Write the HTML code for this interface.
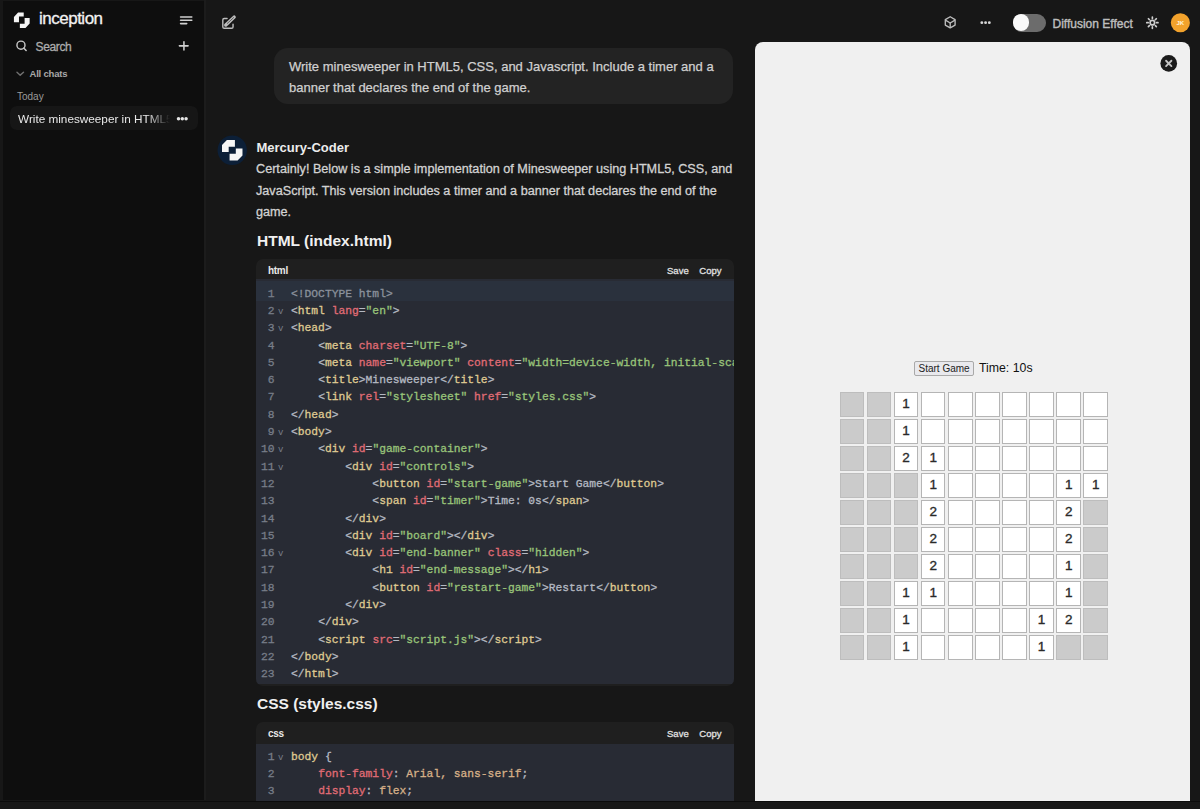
<!DOCTYPE html>
<html><head><meta charset="utf-8">
<style>
*{margin:0;padding:0;box-sizing:border-box}
html,body{width:1200px;height:809px;overflow:hidden;background:#171717;font-family:"Liberation Sans",sans-serif;color:#e0e0e0;position:relative}
.abs{position:absolute}
#side{position:absolute;left:3px;top:1px;width:201px;height:799px;background:#0e0e0e}
#sideb{position:absolute;left:204px;top:0;width:2px;height:800px;background:#1c1c1c}
#side .brand{position:absolute;left:36px;top:8px;font-size:17px;color:#f2f2f2;letter-spacing:-0.5px;-webkit-text-stroke:0.3px #f2f2f2}
#side .search{position:absolute;left:32.5px;top:39px;font-size:12px;color:#acacac;letter-spacing:-0.35px;-webkit-text-stroke:0.3px #acacac}
#side .allchats{position:absolute;left:26.5px;top:67.3px;font-size:9.5px;color:#a8a8a8;font-weight:bold;letter-spacing:-0.2px}
#side .today{position:absolute;left:14px;top:89.8px;font-size:10px;color:#9a9a9a}
#side .item{position:absolute;left:7px;top:105px;width:188px;height:24px;background:#161616;border-radius:7px}
#side .item span{position:absolute;left:8px;top:5.6px;font-size:11.75px;color:#e8e8e8;width:152px;white-space:nowrap;overflow:hidden;-webkit-mask-image:linear-gradient(90deg,#000 85%,transparent 100%)}
.bubble{position:absolute;left:274px;top:48px;width:459px;height:56px;background:#232323;border-radius:14px}
.bubble p{position:absolute;left:15px;top:8.2px;width:440px;font-size:13px;line-height:21px;color:#d0d0d0;-webkit-text-stroke:0.25px #d0d0d0}
.avatar{position:absolute;left:218px;top:136px;width:28px;height:28px;border-radius:50%;background:#0f2542}
.name{position:absolute;left:256.5px;top:140px;font-size:13px;font-weight:bold;color:#ececec}
.msg{position:absolute;left:256px;top:159px;width:485px;font-size:12.65px;line-height:21.6px;color:#d2d2d2;-webkit-text-stroke:0.3px #d2d2d2}
.h3{position:absolute;left:257px;margin-top:1.2px;font-size:15.5px;font-weight:bold;color:#f0f0f0}
.code{position:absolute;left:256px;width:478px;border-radius:7px;overflow:hidden;background:#1f1f1f}
.code .hd{height:20px;position:relative}
.code .hd .lang{position:absolute;left:12px;top:5.8px;font-size:10px;font-weight:bold;letter-spacing:-0.3px;color:#e8e8e8}
.code .hd .btns{position:absolute;right:12.5px;top:6.3px;font-size:9.5px;color:#e0e0e0;word-spacing:8px;-webkit-text-stroke:0.3px #e0e0e0}
.code .bd{background:#282b34;padding-top:6.7px}
.ln{height:17.3px;font-family:"Liberation Mono",monospace;font-size:11.3px;line-height:17.3px;white-space:pre;color:#abb2bf;position:relative;-webkit-text-stroke-width:0.3px}
.ln .n{position:absolute;left:0;width:18.6px;text-align:right;color:#777d88}
.ln .f{position:absolute;left:22px;top:1px;color:#777d88;font-size:9px;-webkit-text-stroke-width:0}
.ln .c{position:absolute;left:35px}
.t{color:#dfc991}.a{color:#e06c75}.s{color:#98c379}.g{color:#b4b9c2}.d{color:#8a919c}.v{color:#d6b088}
#panel{position:absolute;left:755px;top:42px;width:435px;height:758.6px;background:#f0f0f0;border-radius:8px 8px 0 0}
.close{position:absolute;left:1160px;top:55px;width:17px;height:17px;border-radius:50%;background:#1b1b1b}
.btn{position:absolute;left:914.4px;top:360.6px;width:59.4px;height:15px;border:1px solid #a9a9a9;border-radius:2px;background:#e9e9ed;font-size:10px;color:#222;text-align:center;line-height:13.5px}
.time{position:absolute;left:979px;top:361px;font-size:12.3px;color:#111}
#board{position:absolute;left:839.6px;top:392.1px;width:272px}
.cell{position:absolute;width:24.6px;height:24.6px;border:1px solid #b5b5b5;background:#fff;font-size:13.5px;color:#2a2a2a;-webkit-text-stroke:0.35px #2a2a2a;text-align:center;line-height:22.6px}
.cell.h{background:#cbcbcb;border-color:#bdbdbd}
</style></head><body>
<div id="sideb"></div><div id="side">
  <div class="brand">inception</div>
  <div class="search">Search</div>
  <div class="allchats">All chats</div>
  <div class="today">Today</div>
  <div class="item"><span>Write minesweeper in HTML5, CSS, and Javascript</span></div>
</div>

<div class="bubble"><p>Write minesweeper in HTML5, CSS, and Javascript. Include a timer and a banner that declares the end of the game.</p></div>

<div class="name">Mercury-Coder</div>
<div class="msg">Certainly! Below is a simple implementation of Minesweeper using HTML5, CSS, and JavaScript. This version includes a timer and a banner that declares the end of the game.</div>

<div class="h3" style="top:231px">HTML (index.html)</div>
<div class="code" style="top:259px;height:426.5px">
 <div class="hd"><span class="lang">html</span><span class="btns">Save Copy</span></div>
 <div class="bd" id="htmlcode" style="position:relative"><div style="position:absolute;left:0;top:2px;width:100%;height:20px;background:#2a313d"></div>
<div class="ln"><span class="n">1</span><span class="c"><span class="d">&lt;!DOCTYPE html&gt;</span></span></div>
<div class="ln"><span class="n">2</span><span class="f">v</span><span class="c"><span class="g">&lt;</span><span class="t">html</span> <span class="a">lang</span><span class="g">=</span><span class="s">"en"</span><span class="g">&gt;</span></span></div>
<div class="ln"><span class="n">3</span><span class="f">v</span><span class="c"><span class="g">&lt;</span><span class="t">head</span><span class="g">&gt;</span></span></div>
<div class="ln"><span class="n">4</span><span class="c">    <span class="g">&lt;</span><span class="t">meta</span> <span class="a">charset</span><span class="g">=</span><span class="s">"UTF-8"</span><span class="g">&gt;</span></span></div>
<div class="ln"><span class="n">5</span><span class="c">    <span class="g">&lt;</span><span class="t">meta</span> <span class="a">name</span><span class="g">=</span><span class="s">"viewport"</span> <span class="a">content</span><span class="g">=</span><span class="s">"width=device-width, initial-scale=1.0"</span><span class="g">&gt;</span></span></div>
<div class="ln"><span class="n">6</span><span class="c">    <span class="g">&lt;</span><span class="t">title</span><span class="g">&gt;</span><span class="g">Minesweeper</span><span class="g">&lt;/</span><span class="t">title</span><span class="g">&gt;</span></span></div>
<div class="ln"><span class="n">7</span><span class="c">    <span class="g">&lt;</span><span class="t">link</span> <span class="a">rel</span><span class="g">=</span><span class="s">"stylesheet"</span> <span class="a">href</span><span class="g">=</span><span class="s">"styles.css"</span><span class="g">&gt;</span></span></div>
<div class="ln"><span class="n">8</span><span class="c"><span class="g">&lt;/</span><span class="t">head</span><span class="g">&gt;</span></span></div>
<div class="ln"><span class="n">9</span><span class="f">v</span><span class="c"><span class="g">&lt;</span><span class="t">body</span><span class="g">&gt;</span></span></div>
<div class="ln"><span class="n">10</span><span class="f">v</span><span class="c">    <span class="g">&lt;</span><span class="t">div</span> <span class="a">id</span><span class="g">=</span><span class="s">"game-container"</span><span class="g">&gt;</span></span></div>
<div class="ln"><span class="n">11</span><span class="f">v</span><span class="c">        <span class="g">&lt;</span><span class="t">div</span> <span class="a">id</span><span class="g">=</span><span class="s">"controls"</span><span class="g">&gt;</span></span></div>
<div class="ln"><span class="n">12</span><span class="c">            <span class="g">&lt;</span><span class="t">button</span> <span class="a">id</span><span class="g">=</span><span class="s">"start-game"</span><span class="g">&gt;</span><span class="g">Start Game</span><span class="g">&lt;/</span><span class="t">button</span><span class="g">&gt;</span></span></div>
<div class="ln"><span class="n">13</span><span class="c">            <span class="g">&lt;</span><span class="t">span</span> <span class="a">id</span><span class="g">=</span><span class="s">"timer"</span><span class="g">&gt;</span><span class="g">Time: 0s</span><span class="g">&lt;/</span><span class="t">span</span><span class="g">&gt;</span></span></div>
<div class="ln"><span class="n">14</span><span class="c">        <span class="g">&lt;/</span><span class="t">div</span><span class="g">&gt;</span></span></div>
<div class="ln"><span class="n">15</span><span class="c">        <span class="g">&lt;</span><span class="t">div</span> <span class="a">id</span><span class="g">=</span><span class="s">"board"</span><span class="g">&gt;</span><span class="g">&lt;/</span><span class="t">div</span><span class="g">&gt;</span></span></div>
<div class="ln"><span class="n">16</span><span class="f">v</span><span class="c">        <span class="g">&lt;</span><span class="t">div</span> <span class="a">id</span><span class="g">=</span><span class="s">"end-banner"</span> <span class="a">class</span><span class="g">=</span><span class="s">"hidden"</span><span class="g">&gt;</span></span></div>
<div class="ln"><span class="n">17</span><span class="c">            <span class="g">&lt;</span><span class="t">h1</span> <span class="a">id</span><span class="g">=</span><span class="s">"end-message"</span><span class="g">&gt;</span><span class="g">&lt;/</span><span class="t">h1</span><span class="g">&gt;</span></span></div>
<div class="ln"><span class="n">18</span><span class="c">            <span class="g">&lt;</span><span class="t">button</span> <span class="a">id</span><span class="g">=</span><span class="s">"restart-game"</span><span class="g">&gt;</span><span class="g">Restart</span><span class="g">&lt;/</span><span class="t">button</span><span class="g">&gt;</span></span></div>
<div class="ln"><span class="n">19</span><span class="c">        <span class="g">&lt;/</span><span class="t">div</span><span class="g">&gt;</span></span></div>
<div class="ln"><span class="n">20</span><span class="c">    <span class="g">&lt;/</span><span class="t">div</span><span class="g">&gt;</span></span></div>
<div class="ln"><span class="n">21</span><span class="c">    <span class="g">&lt;</span><span class="t">script</span> <span class="a">src</span><span class="g">=</span><span class="s">"script.js"</span><span class="g">&gt;</span><span class="g">&lt;/</span><span class="t">script</span><span class="g">&gt;</span></span></div>
<div class="ln"><span class="n">22</span><span class="c"><span class="g">&lt;/</span><span class="t">body</span><span class="g">&gt;</span></span></div>
<div class="ln"><span class="n">23</span><span class="c"><span class="g">&lt;/</span><span class="t">html</span><span class="g">&gt;</span></span></div>
</div>
</div>
</div>
</div>
</div>
</div>

<div class="h3" style="top:694px">CSS (styles.css)</div>
<div class="code" style="top:722px;height:90px">
 <div class="hd" style="height:21.8px"><span class="lang">css</span><span class="btns">Save Copy</span></div>
 <div class="bd" id="csscode" style="padding-top:4.9px">
<div class="ln"><span class="n">1</span><span class="f">v</span><span class="c"><span class="t">body</span> <span class="g">{</span></span></div>
<div class="ln"><span class="n">2</span><span class="c">    <span class="a">font-family</span><span class="g">:</span> <span class="v">Arial, sans-serif</span><span class="g">;</span></span></div>
<div class="ln"><span class="n">3</span><span class="c">    <span class="a">display</span><span class="g">:</span> <span class="v">flex</span><span class="g">;</span></span></div>
<div class="ln"><span class="n">4</span><span class="c">    <span class="a">flex-direction</span><span class="g">:</span> <span class="v">column</span><span class="g">;</span></span></div>
</div>
</div>
</div>
</div>
</div>
</div>

<div id="panel"></div>
<div class="btn">Start Game</div>
<div class="time">Time: 10s</div>
<div id="board"><!--B-->
<div class="cell h" style="left:0.0px;top:0.0px"></div><div class="cell h" style="left:27.1px;top:0.0px"></div><div class="cell" style="left:54.2px;top:0.0px">1</div><div class="cell" style="left:81.3px;top:0.0px"></div><div class="cell" style="left:108.4px;top:0.0px"></div><div class="cell" style="left:135.5px;top:0.0px"></div><div class="cell" style="left:162.6px;top:0.0px"></div><div class="cell" style="left:189.7px;top:0.0px"></div><div class="cell" style="left:216.8px;top:0.0px"></div><div class="cell" style="left:243.9px;top:0.0px"></div>
<div class="cell h" style="left:0.0px;top:27.0px"></div><div class="cell h" style="left:27.1px;top:27.0px"></div><div class="cell" style="left:54.2px;top:27.0px">1</div><div class="cell" style="left:81.3px;top:27.0px"></div><div class="cell" style="left:108.4px;top:27.0px"></div><div class="cell" style="left:135.5px;top:27.0px"></div><div class="cell" style="left:162.6px;top:27.0px"></div><div class="cell" style="left:189.7px;top:27.0px"></div><div class="cell" style="left:216.8px;top:27.0px"></div><div class="cell" style="left:243.9px;top:27.0px"></div>
<div class="cell h" style="left:0.0px;top:54.1px"></div><div class="cell h" style="left:27.1px;top:54.1px"></div><div class="cell" style="left:54.2px;top:54.1px">2</div><div class="cell" style="left:81.3px;top:54.1px">1</div><div class="cell" style="left:108.4px;top:54.1px"></div><div class="cell" style="left:135.5px;top:54.1px"></div><div class="cell" style="left:162.6px;top:54.1px"></div><div class="cell" style="left:189.7px;top:54.1px"></div><div class="cell" style="left:216.8px;top:54.1px"></div><div class="cell" style="left:243.9px;top:54.1px"></div>
<div class="cell h" style="left:0.0px;top:81.1px"></div><div class="cell h" style="left:27.1px;top:81.1px"></div><div class="cell h" style="left:54.2px;top:81.1px"></div><div class="cell" style="left:81.3px;top:81.1px">1</div><div class="cell" style="left:108.4px;top:81.1px"></div><div class="cell" style="left:135.5px;top:81.1px"></div><div class="cell" style="left:162.6px;top:81.1px"></div><div class="cell" style="left:189.7px;top:81.1px"></div><div class="cell" style="left:216.8px;top:81.1px">1</div><div class="cell" style="left:243.9px;top:81.1px">1</div>
<div class="cell h" style="left:0.0px;top:108.1px"></div><div class="cell h" style="left:27.1px;top:108.1px"></div><div class="cell h" style="left:54.2px;top:108.1px"></div><div class="cell" style="left:81.3px;top:108.1px">2</div><div class="cell" style="left:108.4px;top:108.1px"></div><div class="cell" style="left:135.5px;top:108.1px"></div><div class="cell" style="left:162.6px;top:108.1px"></div><div class="cell" style="left:189.7px;top:108.1px"></div><div class="cell" style="left:216.8px;top:108.1px">2</div><div class="cell h" style="left:243.9px;top:108.1px"></div>
<div class="cell h" style="left:0.0px;top:135.2px"></div><div class="cell h" style="left:27.1px;top:135.2px"></div><div class="cell h" style="left:54.2px;top:135.2px"></div><div class="cell" style="left:81.3px;top:135.2px">2</div><div class="cell" style="left:108.4px;top:135.2px"></div><div class="cell" style="left:135.5px;top:135.2px"></div><div class="cell" style="left:162.6px;top:135.2px"></div><div class="cell" style="left:189.7px;top:135.2px"></div><div class="cell" style="left:216.8px;top:135.2px">2</div><div class="cell h" style="left:243.9px;top:135.2px"></div>
<div class="cell h" style="left:0.0px;top:162.2px"></div><div class="cell h" style="left:27.1px;top:162.2px"></div><div class="cell h" style="left:54.2px;top:162.2px"></div><div class="cell" style="left:81.3px;top:162.2px">2</div><div class="cell" style="left:108.4px;top:162.2px"></div><div class="cell" style="left:135.5px;top:162.2px"></div><div class="cell" style="left:162.6px;top:162.2px"></div><div class="cell" style="left:189.7px;top:162.2px"></div><div class="cell" style="left:216.8px;top:162.2px">1</div><div class="cell h" style="left:243.9px;top:162.2px"></div>
<div class="cell h" style="left:0.0px;top:189.2px"></div><div class="cell h" style="left:27.1px;top:189.2px"></div><div class="cell" style="left:54.2px;top:189.2px">1</div><div class="cell" style="left:81.3px;top:189.2px">1</div><div class="cell" style="left:108.4px;top:189.2px"></div><div class="cell" style="left:135.5px;top:189.2px"></div><div class="cell" style="left:162.6px;top:189.2px"></div><div class="cell" style="left:189.7px;top:189.2px"></div><div class="cell" style="left:216.8px;top:189.2px">1</div><div class="cell h" style="left:243.9px;top:189.2px"></div>
<div class="cell h" style="left:0.0px;top:216.2px"></div><div class="cell h" style="left:27.1px;top:216.2px"></div><div class="cell" style="left:54.2px;top:216.2px">1</div><div class="cell" style="left:81.3px;top:216.2px"></div><div class="cell" style="left:108.4px;top:216.2px"></div><div class="cell" style="left:135.5px;top:216.2px"></div><div class="cell" style="left:162.6px;top:216.2px"></div><div class="cell" style="left:189.7px;top:216.2px">1</div><div class="cell" style="left:216.8px;top:216.2px">2</div><div class="cell h" style="left:243.9px;top:216.2px"></div>
<div class="cell h" style="left:0.0px;top:243.3px"></div><div class="cell h" style="left:27.1px;top:243.3px"></div><div class="cell" style="left:54.2px;top:243.3px">1</div><div class="cell" style="left:81.3px;top:243.3px"></div><div class="cell" style="left:108.4px;top:243.3px"></div><div class="cell" style="left:135.5px;top:243.3px"></div><div class="cell" style="left:162.6px;top:243.3px"></div><div class="cell" style="left:189.7px;top:243.3px">1</div><div class="cell h" style="left:216.8px;top:243.3px"></div><div class="cell h" style="left:243.9px;top:243.3px"></div>
</div><!--E-->

<!-- sidebar icons -->
<svg class="abs" style="left:8px;top:8px" width="28" height="24" viewBox="0 0 944 809" preserveAspectRatio="none"><g fill="#f4f4f4"><polygon points="340,150 530,150 530,290 370,290 370,480 200,480 200,300"/><polygon points="590,670 400,670 400,530 560,530 560,340 730,340 730,520"/></g></svg>
<svg class="abs" style="left:10px;top:36px" width="30" height="48" viewBox="0 0 506 809" preserveAspectRatio="none"><circle cx="185" cy="155" r="68" fill="none" stroke="#c8c8c8" stroke-width="24"/><line x1="235" y1="205" x2="272" y2="243" stroke="#c8c8c8" stroke-width="26" stroke-linecap="round"/><polyline points="118,612 172,660 228,612" fill="none" stroke="#707070" stroke-width="24" stroke-linecap="round" stroke-linejoin="round"/></svg>
<svg class="abs" style="left:170px;top:8px" width="30" height="48" viewBox="0 0 506 809" preserveAspectRatio="none"><g stroke="#d0d0d0" stroke-width="26" stroke-linecap="round"><line x1="178" y1="150" x2="368" y2="150"/><line x1="178" y1="208" x2="368" y2="208"/><line x1="178" y1="263" x2="282" y2="263"/><line x1="235" y1="568" x2="235" y2="708"/><line x1="158" y1="638" x2="305" y2="638"/></g></svg>
<svg class="abs" style="left:140px;top:100px" width="70" height="36" viewBox="0 0 1200 617" preserveAspectRatio="none"><g fill="#e6e6e6"><circle cx="660" cy="320" r="30"/><circle cx="725" cy="320" r="30"/><circle cx="790" cy="320" r="30"/></g></svg>
<!-- edit icon -->
<svg class="abs" style="left:216px;top:10px" width="26" height="26" viewBox="0 0 809 809"><g fill="none" stroke="#bdbdbd" stroke-width="44" stroke-linejoin="round" stroke-linecap="round"><path d="M345 265 L255 265 Q212 265 212 308 L212 528 Q212 570 255 570 L488 570 Q530 570 530 528 L530 440"/></g><line x1="305" y1="465" x2="565" y2="222" stroke="#bdbdbd" stroke-width="105" stroke-linecap="round"/><line x1="350" y1="420" x2="548" y2="236" stroke="#5a5a5a" stroke-width="30" stroke-linecap="round"/><polygon points="262,512 275,440 335,500" fill="#bdbdbd"/></svg>
<!-- top right -->
<svg class="abs" style="left:940px;top:12px" width="22" height="22" viewBox="0 0 809 809"><g fill="none" stroke="#bcbcbc" stroke-width="50" stroke-linejoin="round"><polygon points="375,175 555,280 555,480 375,585 195,480 195,280"/><polyline points="200,300 375,405 550,300"/><line x1="375" y1="405" x2="375" y2="585"/></g></svg>
<svg class="abs" style="left:930px;top:5px" width="100" height="40" viewBox="0 0 1200 480"><g fill="#d8d8d8"><circle cx="622" cy="212" r="17"/><circle cx="667" cy="212" r="17"/><circle cx="712" cy="212" r="17"/></g></svg>
<div class="abs" style="left:1013px;top:13.6px;width:32.6px;height:18.2px;border-radius:9.1px;background:#6c6c6c"></div>
<div class="abs" style="left:1012.9px;top:14.3px;width:16.4px;height:16.4px;border-radius:50%;background:#fafafa"></div>
<div class="abs" style="left:1052.5px;top:16.7px;font-size:12px;-webkit-text-stroke:0.4px #bdbdbd;color:#bdbdbd">Diffusion Effect</div>
<svg class="abs" style="left:1140px;top:8px" width="56" height="30" viewBox="0 0 1200 643"><g stroke="#cfcfcf" stroke-width="36" stroke-linecap="round" fill="none"><circle cx="265" cy="315" r="48"/><line x1="265" y1="195" x2="265" y2="225"/><line x1="265" y1="405" x2="265" y2="435"/><line x1="145" y1="315" x2="175" y2="315"/><line x1="355" y1="315" x2="385" y2="315"/><line x1="180" y1="230" x2="201" y2="251"/><line x1="329" y1="379" x2="350" y2="400"/><line x1="180" y1="400" x2="201" y2="379"/><line x1="329" y1="251" x2="350" y2="230"/></g><circle cx="865" cy="315" r="205" fill="#f2a22c"/><text x="865" y="360" font-family="Liberation Sans" font-size="130" font-weight="bold" fill="#fff3d8" text-anchor="middle">JK</text></svg>
<!-- avatar logo -->
<svg class="abs" style="left:214px;top:132px" width="36" height="36" viewBox="0 0 809 809"><circle cx="410" cy="410" r="330" fill="#0c1f37"/><g fill="#f6f6f6"><polygon points="290,180 470,180 470,330 330,330 330,450 180,450 180,290"/><polygon points="530,640 350,640 350,490 490,490 490,370 640,370 640,530"/></g></svg>
<!-- close -->
<svg class="abs" style="left:1140px;top:35px" width="60" height="50" viewBox="0 0 971 809"><circle cx="465" cy="460" r="135" fill="#1b1b1b"/><g stroke="#c4c4c4" stroke-width="30" stroke-linecap="round"><line x1="422" y1="417" x2="508" y2="503"/><line x1="508" y1="417" x2="422" y2="503"/></g></svg>
<div class="abs" style="left:0;top:800.6px;width:1200px;height:9px;background:#181818;border-top:0.6px solid #0c0c0c"></div>
</body></html>
